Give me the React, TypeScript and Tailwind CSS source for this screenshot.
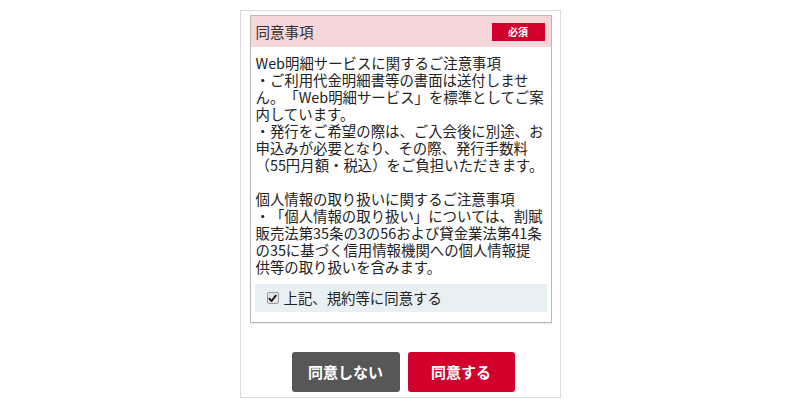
import React from "react";

const font = { fontFamily: '"Noto Sans CJK JP", "Noto Sans", sans-serif' };

// consent notes, one entry per printed line ("" = blank line)
const noteLines = [
    "Web明細サービスに関するご注意事項",
    "・ご利用代金明細書等の書面は送付しませ",
    "ん。「Web明細サービス」を標準としてご案",
    "内しています。",
    "・発行をご希望の際は、ご入会後に別途、お",
    "申込みが必要となり、その際、発行手数料",
    "（55円月額・税込）をご負担いただきます。",
    "",
    "個人情報の取り扱いに関するご注意事項",
    "・「個人情報の取り扱い」については、割賦",
    "販売法第35条の3の56および貸金業法第41条",
    "の35に基づく信用情報機関への個人情報提",
    "供等の取り扱いを含みます。",
];

function CheckMark() {
    return (
        <span className="flex h-[12px] w-[12px] items-center justify-center rounded-[2px] border border-[#9a9a9a] bg-[#e4e4e4]">
            <svg width="9" height="9" viewBox="0 0 10 10">
                <path d="M1.5 5.2 L4 7.8 L8.6 1.8" fill="none" stroke="#111" strokeWidth="2" strokeLinecap="round" strokeLinejoin="round" />
            </svg>
        </span>
    );
}

function App() {
    return (
        <div className="min-h-screen bg-white pt-[10px] text-[#222] [text-spacing-trim:space-all]" style={font}>
            <div className="mx-auto flex h-[388px] w-[321px] flex-col border border-[#dadada] px-[9px] pt-[4px]">
                {/* agreement box */}
                <div className="w-[302px] border border-[#b9b9b9] shadow-[0_1px_1px_rgba(0,0,0,0.08)]">
                    <div className="flex h-[31px] items-center justify-between bg-[#f6d6d8] pl-[5px] pr-[6px]">
                        <span className="text-[14.5px] text-[#333]">同意事項</span>
                        <span className="flex h-[18px] w-[53px] items-center justify-center bg-[#d2002c] text-[10px] font-bold text-white">
                            必須
                        </span>
                    </div>
                    <div className="px-[5px] pt-[7px] text-[14.4px] leading-[17px] whitespace-nowrap">
                        {noteLines.map((line, i) => (
                            <div key={i} className="h-[17px]">
                                {line}
                            </div>
                        ))}
                    </div>
                    <div className="px-[4px] pt-[9px] pb-[10px]">
                        <label className="flex h-[28px] items-center gap-[5px] bg-[#e9f0f3] pl-[12px] text-[14.4px]">
                            <CheckMark />
                            上記、規約等に同意する
                        </label>
                    </div>
                </div>

                {/* buttons */}
                <div className="mt-[29px] flex justify-center gap-[8px] pl-[6px]">
                    <button className="h-[40px] w-[108px] rounded-[3px] bg-[#575757] text-[15px] font-bold text-white">
                        同意しない
                    </button>
                    <button className="h-[40px] w-[107px] rounded-[3px] bg-[#d2002c] text-[15px] font-bold text-white">
                        同意する
                    </button>
                </div>
            </div>
        </div>
    );
}

export default App;
